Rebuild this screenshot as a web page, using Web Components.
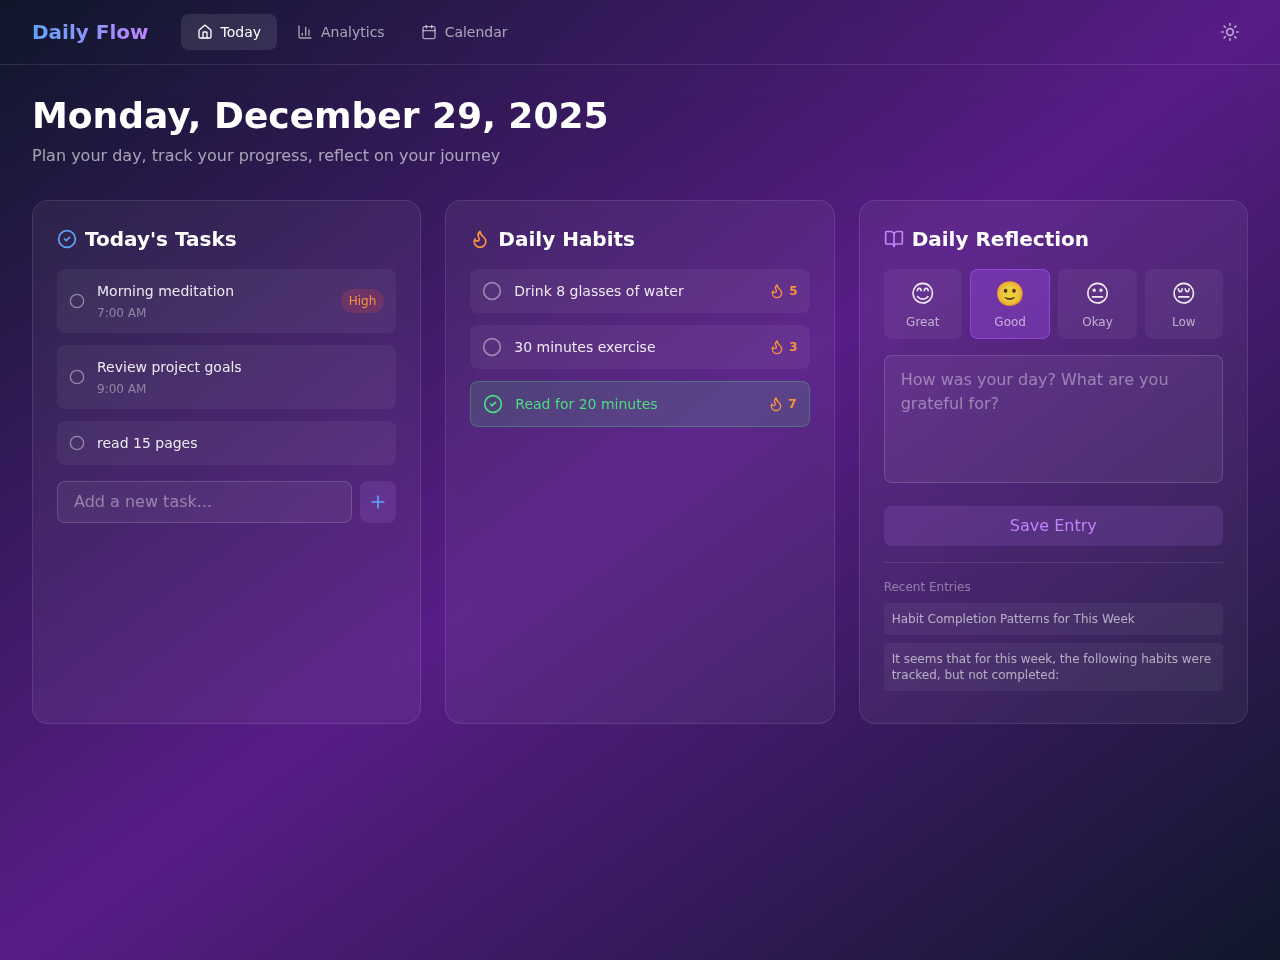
<!DOCTYPE html>
<html lang="en"><head><meta charset="utf-8"><title>Daily Flow</title>
<style>
html,body{margin:0;min-height:960px}
body{background:linear-gradient(to bottom right,#0f172a 0%,#581c87 50%,#0f172a 100%);font-family:"DejaVu Sans",sans-serif;color:#fff;height:960px;overflow:hidden}
</style></head><body>
<df-app></df-app>
<script>
const I={
home:'<path d="M15 21v-8a1 1 0 0 0-1-1h-4a1 1 0 0 0-1 1v8"/><path d="M3 10a2 2 0 0 1 .709-1.528l7-5.999a2 2 0 0 1 2.582 0l7 5.999A2 2 0 0 1 21 10v9a2 2 0 0 1-2 2H5a2 2 0 0 1-2-2z"/>',
chart:'<path d="M3 3v16a2 2 0 0 0 2 2h16"/><path d="M8 17v-3"/><path d="M13 17V5"/><path d="M18 17V9"/>',
cal:'<path d="M8 2v4"/><path d="M16 2v4"/><rect x="3" y="4" width="18" height="18" rx="2"/><path d="M3 10h18"/>',
sun:'<circle cx="12" cy="12" r="4"/><path d="M12 2v2"/><path d="M12 20v2"/><path d="m4.93 4.93 1.41 1.41"/><path d="m17.66 17.66 1.41 1.41"/><path d="M2 12h2"/><path d="M20 12h2"/><path d="m6.34 17.66-1.41 1.41"/><path d="m19.07 4.93-1.41 1.41"/>',
flame:'<path d="M8.5 14.5A2.5 2.5 0 0 0 11 12c0-1.38-.5-2-1-3-1.072-2.143-.224-4.054 2-6 .5 2.5 2 4.9 4 6.5 2 1.6 3 3.5 3 5.5a7 7 0 1 1-14 0c0-1.153.433-2.294 1-3a2.5 2.5 0 0 0 2.5 2.5z"/>',
book:'<path d="M12 7v14"/><path d="M3 18a1 1 0 0 1-1-1V4a1 1 0 0 1 1-1h5a4 4 0 0 1 4 4 4 4 0 0 1 4-4h5a1 1 0 0 1 1 1v13a1 1 0 0 1-1 1h-6a3 3 0 0 0-3 3 3 3 0 0 0-3-3z"/>',
check:'<circle cx="12" cy="12" r="10"/><path d="m9 12 2 2 4-4"/>',
circle:'<circle cx="12" cy="12" r="10"/>',
plus:'<path d="M5 12h14"/><path d="M12 5v14"/>'
};
const svg=(n,s,c='currentColor')=>`<svg xmlns="http://www.w3.org/2000/svg" width="${s}" height="${s}" viewBox="0 0 24 24" fill="none" stroke="${c}" stroke-width="2" stroke-linecap="round" stroke-linejoin="round" style="display:block;flex:none">${I[n]}</svg>`;
class Base extends HTMLElement{
  connectedCallback(){ if(!this.shadowRoot){this.attachShadow({mode:'open'}).innerHTML=this.render();} }
  a(n,d=''){return this.getAttribute(n)??d}
}
customElements.define('df-nav-item',class extends Base{render(){return `<style>
:host{display:flex;align-items:center;gap:8px;height:36px;padding:0 16px;border-radius:8px;font-size:14px;line-height:20px;color:rgba(255,255,255,.6)}
:host([active]){background:rgba(255,255,255,.1);color:#fff}
</style>${svg(this.a('icon'),16)}<slot></slot>`}});
customElements.define('df-header',class extends Base{render(){return `<style>
:host{display:flex;align-items:center;justify-content:space-between;padding:14px 32px;border-bottom:1px solid rgba(255,255,255,.1);backdrop-filter:blur(12px)}
.l{display:flex;align-items:center;gap:32px}
.logo{font-size:20px;line-height:28px;font-weight:700;background:linear-gradient(90deg,#60a5fa,#c084fc);-webkit-background-clip:text;background-clip:text;color:transparent}
nav{display:flex;gap:4px}
.t{width:36px;height:36px;display:flex;align-items:center;justify-content:center;color:rgba(255,255,255,.6)}
</style><div class="l"><div class="logo">Daily Flow</div><nav>
<df-nav-item icon="home" active>Today</df-nav-item><df-nav-item icon="chart">Analytics</df-nav-item><df-nav-item icon="cal">Calendar</df-nav-item>
</nav></div><div class="t">${svg('sun',20)}</div>`}});
customElements.define('df-card',class extends Base{render(){return `<style>
:host{display:block;box-sizing:border-box;height:524px;padding:24px;border:1px solid rgba(255,255,255,.1);border-radius:16px;background:rgba(255,255,255,.05);min-width:0;backdrop-filter:blur(12px)}
h2{margin:0 0 16px;display:flex;align-items:center;gap:8px;font-size:20px;line-height:28px;font-weight:700;color:#fff}
</style><h2>${svg(this.a('icon'),20,this.a('color'))}${this.a('heading')}</h2><slot></slot>`}});
customElements.define('df-task',class extends Base{render(){const time=this.a('time'),pr=this.a('priority');return `<style>
:host{display:flex;align-items:center;gap:12px;padding:12px;border-radius:8px;background:rgba(255,255,255,.05);margin-bottom:12px;color:rgba(255,255,255,.42)}
.m{flex:1;min-width:0}
.t{font-size:14px;line-height:20px;color:rgba(255,255,255,.9)}
.s{font-size:12px;line-height:16px;margin-top:4px;color:rgba(255,255,255,.4)}
.p{font-size:12px;line-height:16px;padding:4px 8px;border-radius:999px;background:rgba(239,68,68,.2);color:#fb923c}
</style>${svg('circle',16)}<div class="m"><div class="t"><slot></slot></div>${time?`<div class="s">${time}</div>`:''}</div>${pr?`<div class="p">${pr}</div>`:''}`}});
customElements.define('df-habit',class extends Base{render(){const d=this.hasAttribute('done');return `<style>
:host{display:flex;align-items:center;gap:12px;padding:12px;border-radius:8px;background:rgba(255,255,255,.05);margin-bottom:12px;color:rgba(255,255,255,.42)}
:host([done]){background:rgba(74,222,128,.15);border:1px solid rgba(74,222,128,.3);color:#4ade80}
.m{flex:1;font-size:14px;line-height:20px;color:rgba(255,255,255,.9)}
:host([done]) .m{color:#4ade80}
.c{display:flex;align-items:center;gap:4px;color:#fb923c;font-size:12px;line-height:16px;font-weight:700}
</style>${svg(d?'check':'circle',20)}<div class="m"><slot></slot></div><div class="c">${svg('flame',16)}<span>${this.a('streak')}</span></div>`}});
customElements.define('df-mood',class extends Base{render(){return `<style>
:host{flex:1 1 0;box-sizing:border-box;min-width:0;display:flex;flex-direction:column;align-items:center;gap:4px;padding:9px 8px 0;height:70px;border-radius:8px;background:rgba(255,255,255,.05);font-size:12px;line-height:16px;color:rgba(255,255,255,.6)}
:host([active]){background:rgba(168,85,247,.3);border:1px solid rgba(168,85,247,.6);padding-top:8px}
.e{font-size:24px;line-height:32px;color:rgba(255,255,255,.9);height:32px}
</style><div class="e">${this.a('emoji')}</div><slot></slot>`}});
customElements.define('df-entry',class extends Base{render(){return `<style>
:host{display:block;padding:8px;border-radius:4px;background:rgba(255,255,255,.05);font-size:12px;line-height:16px;color:rgba(255,255,255,.6);margin-bottom:8px}
</style><slot></slot>`}});
customElements.define('df-add-task',class extends Base{render(){return `<style>
:host{display:flex;gap:8px;margin-top:16px}
input{flex:1;min-width:0;box-sizing:border-box;height:42px;padding:0 16px 2px;font:16px "DejaVu Sans",sans-serif;color:#fff;background:rgba(255,255,255,.05);border:1px solid rgba(255,255,255,.15);border-radius:8px;outline:0}
input::placeholder{color:rgba(255,255,255,.4)}
button{width:36px;height:42px;padding:0;border:0;border-radius:8px;background:rgba(190,130,255,.14);color:#60a5fa;display:flex;align-items:center;justify-content:center}
</style><input placeholder="Add a new task..."><button aria-label="Add">${svg('plus',20)}</button>`}});
customElements.define('df-reflection',class extends Base{render(){return `<style>
:host{display:block}
.moods{display:flex;gap:8px;margin-bottom:16px}
textarea{display:block;box-sizing:border-box;width:100%;height:128px;padding:12px 16px;margin:0 0 23px;resize:none;font:16px/24px "DejaVu Sans",sans-serif;color:#fff;background:rgba(255,255,255,.05);border:1px solid rgba(255,255,255,.15);border-radius:8px;outline:0}
textarea::placeholder{color:rgba(255,255,255,.4)}
button{display:block;width:100%;height:40px;border:0;border-radius:8px;background:rgba(190,130,255,.14);color:#c084fc;font:16px/24px "DejaVu Sans",sans-serif;padding:0}
.rec{margin-top:16px;padding-top:16px;border-top:1px solid rgba(255,255,255,.1)}
h3{margin:0 0 8px;font-size:12px;line-height:16px;font-weight:400;color:rgba(255,255,255,.4)}
</style><div class="moods">
<df-mood emoji="😊">Great</df-mood><df-mood emoji="🙂" active>Good</df-mood><df-mood emoji="😐">Okay</df-mood><df-mood emoji="😔">Low</df-mood>
</div><textarea placeholder="How was your day? What are you grateful for?"></textarea><button>Save Entry</button>
<div class="rec"><h3>Recent Entries</h3><df-entry>Habit Completion Patterns for This Week</df-entry><df-entry>It seems that for this week, the following habits were tracked, but not completed:</df-entry></div>`}});
customElements.define('df-app',class extends Base{render(){return `<style>
:host{display:block}
main{padding:31px 32px 32px}
.head{backdrop-filter:blur(1px)}
h1{margin:0 0 8px;font-size:36px;line-height:40px;font-weight:700;color:#fff}
.sub{font-size:16px;line-height:24px;color:rgba(255,255,255,.6);margin-bottom:32px}
.g{display:grid;grid-template-columns:repeat(3,minmax(0,1fr));gap:24px}
</style><df-header></df-header><main><div class="head"><h1>Monday, December 29, 2025</h1><div class="sub">Plan your day, track your progress, reflect on your journey</div></div>
<div class="g">
<df-card heading="Today's Tasks" icon="check" color="#60a5fa">
<df-task time="7:00 AM" priority="High">Morning meditation</df-task><df-task time="9:00 AM">Review project goals</df-task><df-task>read 15 pages</df-task><df-add-task></df-add-task>
</df-card>
<df-card heading="Daily Habits" icon="flame" color="#fb923c">
<df-habit streak="5">Drink 8 glasses of water</df-habit><df-habit streak="3">30 minutes exercise</df-habit><df-habit streak="7" done>Read for 20 minutes</df-habit>
</df-card>
<df-card heading="Daily Reflection" icon="book" color="#c084fc"><df-reflection></df-reflection></df-card>
</div></main>`}});
</script></body></html>
